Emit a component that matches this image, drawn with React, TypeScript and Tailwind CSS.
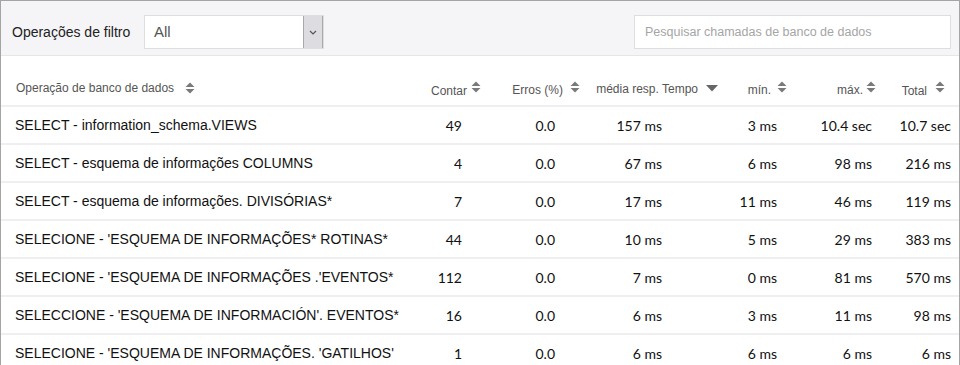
import React from "react";

const rows = [
  ["SELECT - information_schema.VIEWS", "49", "0.0", "157 ms", "3 ms", "10.4 sec", "10.7 sec"],
  ["SELECT - esquema de informações COLUMNS", "4", "0.0", "67 ms", "6 ms", "98 ms", "216 ms"],
  ["SELECT - esquema de informações. DIVISÓRIAS*", "7", "0.0", "17 ms", "11 ms", "46 ms", "119 ms"],
  ["SELECIONE - 'ESQUEMA DE INFORMAÇÕES* ROTINAS*", "44", "0.0", "10 ms", "5 ms", "29 ms", "383 ms"],
  ["SELECIONE - 'ESQUEMA DE INFORMAÇÕES .'EVENTOS*", "112", "0.0", "7 ms", "0 ms", "81 ms", "570 ms"],
  ["SELECCIONE - 'ESQUEMA DE INFORMACIÓN'. EVENTOS*", "16", "0.0", "6 ms", "3 ms", "11 ms", "98 ms"],
  ["SELECIONE - 'ESQUEMA DE INFORMAÇÕES. 'GATILHOS'", "1", "0.0", "6 ms", "6 ms", "6 ms", "6 ms"],
];

function SortBoth() {
  return (
    <svg width="10" height="12" viewBox="0 0 10 12" className="shrink-0 block">
      <path d="M5 0.5 L9.5 5 L0.5 5 Z" fill="#7a7a7a" />
      <path d="M0.5 7 L9.5 7 L5 11.5 Z" fill="#7a7a7a" />
    </svg>
  );
}

function SortDown() {
  return (
    <svg width="12" height="7" viewBox="0 0 12 7" className="shrink-0 block">
      <path d="M0 0 L12 0 L6 6.5 Z" fill="#666" />
    </svg>
  );
}

const grid = "grid grid-cols-[415px_70px_105px_135px_75px_85px_73px]";

const headPad = ["pr-[5px]", "pr-[11px]", "pr-[8px]", "pr-[14px]", "pr-[10px]", "pr-[14px]"];
const cellPad = ["pr-[24px]", "pr-[36px]", "pr-[64px]", "pr-[24px]", "pr-[14px]", "pr-[8px]"];
const headLabels = ["Contar", "Erros (%)", "média resp. Tempo", "mín.", "máx.", "Total"];
const headGap = ["gap-[4px]", "gap-[7px]", "gap-[8px]", "gap-[6px]", "gap-[3px]", "gap-[8px]"];
const headOffset = ["pt-[2px]", "pt-[1px]", "pt-0", "pt-[1px]", "pt-[1px]", "pt-[2px]"];

export default function App() {
  return (
    <div
      className="w-[960px] h-[365px] overflow-hidden border border-b-0 border-[#a4a4a4] bg-white"
      style={{ fontFamily: "'Liberation Sans', Arial, sans-serif" }}
    >
      <div className="h-[55px] bg-[#f5f5f7] border-b border-[#e6e6e8] flex items-start pt-[14px]">
        <div className="pl-[11px] w-[143px] text-[14px] text-[#222] leading-[34px]">Operações de filtro</div>
        <div className="w-[180px] h-[34px] bg-white border border-[#dedede] flex">
          <div className="flex-1 pl-[9px] text-[15px] leading-[32px] text-[#555]">All</div>
          <div className="w-[20px] h-[32px] bg-[#dddce1] border-l border-[#a8a8a8] border-r flex items-center justify-center">
            <svg width="8" height="5" viewBox="0 0 8 5">
              <path d="M1 1 L4 4 L7 1" stroke="#555" strokeWidth="1.2" fill="none" />
            </svg>
          </div>
        </div>
        <div className="flex-1" />
        <div className="w-[317px] h-[34px] mr-[8px] bg-white border border-[#dedede] pl-[10px] text-[12.5px] leading-[32px] text-[#a5a5a5]">
          Pesquisar chamadas de banco de dados
        </div>
      </div>

      <div className={`${grid} h-[51px] border-b-2 border-[#efeff1] text-[12px] text-[#555]`}>
        <div className="pl-[15px] pt-[24px] flex items-start gap-[11px]">
          <span className="leading-[16px]">Operação de banco de dados</span>
          <span className="pt-[2px]"><SortBoth /></span>
        </div>
        {headLabels.map((h, i) => (
          <div key={h} className={`flex justify-end items-start pt-[25px] ${headPad[i]} ${headGap[i]}`}>
            <span className={`leading-[16px] ${headOffset[i]}`}>{h}</span>
            {i === 2 ? (
              <span className="pt-[4px]"><SortDown /></span>
            ) : (
              <span className="pt-0"><SortBoth /></span>
            )}
          </div>
        ))}
      </div>

      {rows.map((r) => (
        <div key={r[0]} className={`${grid} h-[38px] border-b-2 border-[#efeff1] items-center`}>
          <div className="pl-[14px] text-[14px] text-[#111]">{r[0]}</div>
          {r.slice(1).map((c, i) => (
            <div
              key={i}
              className={`text-right text-[14px] text-[#111] ${cellPad[i]}`}
              style={{ fontFamily: "Lato, 'Open Sans', sans-serif" }}
            >
              {c}
            </div>
          ))}
        </div>
      ))}
    </div>
  );
}
